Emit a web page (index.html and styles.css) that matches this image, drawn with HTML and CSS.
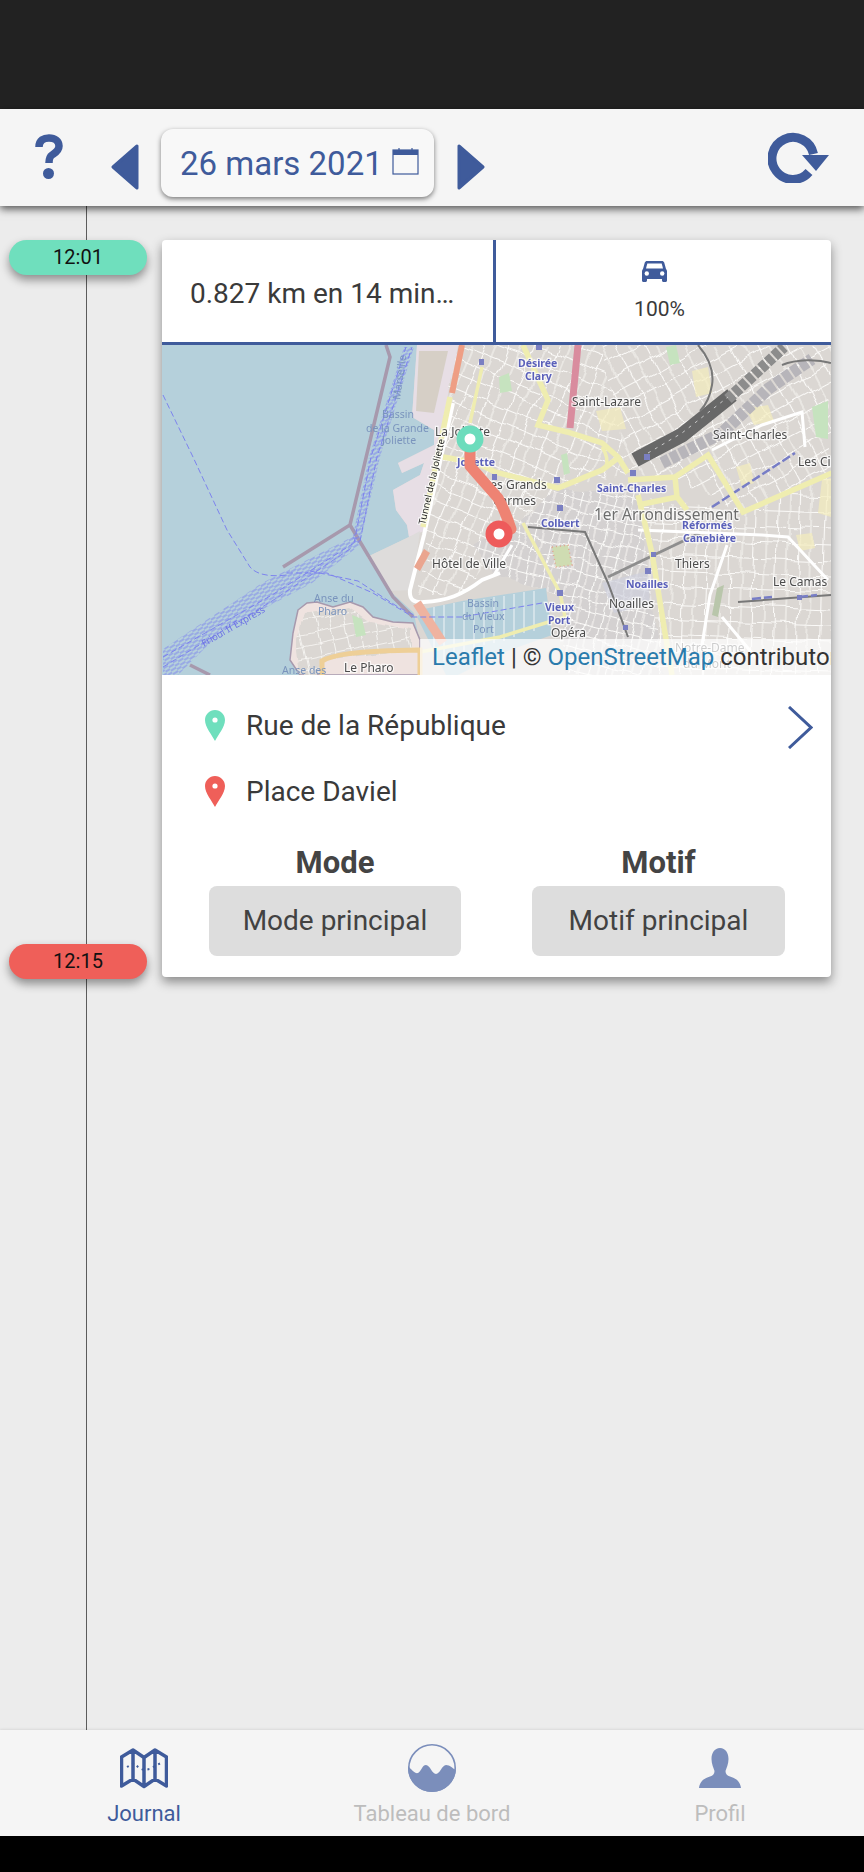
FILE: index.html
```html
<!doctype html>
<html lang="fr">
<head>
  <meta charset="utf-8">
  <meta content="width=device-width, initial-scale=1" name="viewport">
  <title>Journal</title>
  <link rel="stylesheet" href="styles.css">
</head>
<body>
  <div id="status_bar"></div>

  <div id="header">
    <svg class="help_icon" viewBox="0 0 28 45">
      <path class="help_hook" d="M4 13C4 6 9 4 14 4C20 4 24 7 24 12C24 17 20 19 17 21C14 23 14 26 14 29"/>
      <circle class="blue_fill" cx="13.5" cy="39.5" r="5.5"/>
    </svg>
    <svg class="arrow_icon arrow_prev" viewBox="0 0 28 46">
      <path class="blue_fill rounded" d="M26 2V44L2 23Z"/>
    </svg>
    <div id="date_button">
      <span>26 mars 2021</span>
      <svg class="calendar_icon" viewBox="0 0 27 27">
        <rect class="calendar_frame" x="1" y="2" width="25" height="24"/>
        <rect class="blue_fill" x="1" y="2" width="25" height="5"/>
        <path class="calendar_rings" d="M7 0V4M20 0V4"/>
      </svg>
    </div>
    <svg class="arrow_icon arrow_next" viewBox="0 0 28 46">
      <path class="blue_fill rounded" d="M2 2V44L26 23Z"/>
    </svg>
    <svg class="refresh_icon" viewBox="0 0 61 51">
      <path class="refresh_arc" d="M41 40A21 21 0 1 1 45.5 22"/>
      <path class="blue_fill" d="M34 23H61L48 39Z"/>
    </svg>
  </div>

  <div id="journal">
    <div class="times">
      <div class="time_pill pill_start">12:01</div>
      <div class="time_pill pill_end">12:15</div>
    </div>

    <div class="trip_card">
      <div class="trip_head">
        <div class="trip_summary"><span>0.827 km en 14 minutes</span></div>
        <div class="trip_mode">
          <svg class="car_icon" viewBox="0 0 25 21">
            <path class="blue_fill" d="M5 0H20C21 0 21.800 .6 22.200 1.600L24 8C24.600 8.600 25 9.400 25 10.300V19.500C25 20.300 24.400 21 23.500 21H21.500C20.700 21 20 20.300 20 19.500V18H5V19.500C5 20.300 4.300 21 3.500 21H1.500C.6 21 0 20.300 0 19.500V10.300C0 9.400 .4 8.600 1 8L2.800 1.600C3.200 .6 4 0 5 0Z"/>
            <path class="car_glass" d="M5.300 2.500H19.700L21 7.500H4Z"/>
            <circle class="car_glass" cx="4.800" cy="12.500" r="2.200"/>
            <circle class="car_glass" cx="20.200" cy="12.500" r="2.200"/>
          </svg>
          <span>100%</span>
        </div>
      </div>

      <div class="trip_map">
        <svg class="map_tiles" viewBox="0 0 669 330">
          <defs>
            <pattern id="grid_north" width="23" height="14" patternUnits="userSpaceOnUse" patternTransform="rotate(22)">
              <rect class="block" width="23" height="14"/><path class="street" d="M0 0H23M0 0V14"/><path class="lane" d="M11 0V14"/>
            </pattern>
            <pattern id="grid_east" width="25" height="15" patternUnits="userSpaceOnUse" patternTransform="rotate(-28)">
              <rect class="block" width="25" height="15"/><path class="street" d="M0 0H25M0 0V15"/><path class="lane" d="M12 0V15"/>
            </pattern>
            <pattern id="grid_south" width="23" height="16" patternUnits="userSpaceOnUse" patternTransform="rotate(2)">
              <rect class="block" width="23" height="16"/><path class="street" d="M0 0H23M0 0V16"/><path class="lane" d="M12 0V16"/>
            </pattern>
            <pattern id="grid_center" width="17" height="12" patternUnits="userSpaceOnUse" patternTransform="rotate(14)">
              <rect class="block block_dark" width="17" height="12"/><path class="street" d="M0 0H17M0 0V12"/><path class="lane" d="M8 0V12"/>
            </pattern>
            <pattern id="grid_pharo" width="15" height="12" patternUnits="userSpaceOnUse" patternTransform="rotate(-12)">
              <rect class="block" width="15" height="12"/><path class="street thin" d="M0 0H15M0 0V12"/>
            </pattern>
            <pattern id="ferry_hatch" width="11" height="4" patternUnits="userSpaceOnUse" patternTransform="rotate(-32)">
              <path class="ferry_dash" d="M0 1H6M6 3H11"/>
            </pattern>
            <filter id="soften"><feGaussianBlur stdDeviation="0.45"/></filter>
            <filter id="wobble" x="0" y="0" width="100%" height="100%">
              <feTurbulence type="fractalNoise" baseFrequency="0.035" numOctaves="2" seed="4" result="noise"/>
              <feDisplacementMap in="SourceGraphic" in2="noise" scale="11" xChannelSelector="R" yChannelSelector="G"/>
            </filter>
          </defs>

          <g filter="url(#soften)">
            <rect class="water" width="669" height="330"/>

            <!-- land and port -->
            <path class="land" d="M255 0L250 72L272 85L272 100L236 118L240 128L262 118L258 130L231 145L234 165L245 180L247 192L205 212L228 246L252 268L258 300L258 330H669V0Z"/>
            <path class="port" d="M255 0L250 72L272 85L272 100L236 118L240 128L262 118L258 130L231 145L234 165L245 180L247 192L262 186L290 50L298 0Z"/>
            <path class="quay" d="M257 6H286L272 68L254 66Z"/>
            <path class="quay_gray" d="M205 212L247 192L258 186L250 245L228 246Z"/>
            <path class="peninsula" d="M136 265L145 258L155 257L171 262L188 257L201 262L211 272L231 277L251 278L258 295V330H138L128 315L131 288Z"/>
            <g filter="url(#wobble)">
              <path fill="url(#grid_pharo)" d="M142 270L186 262L208 277L250 284V305L160 315L155 330H138L134 296Z"/>
            </g>

            <!-- street grids -->
            <g filter="url(#wobble)">
              <path fill="url(#grid_north)" d="M294 0H440L466 130L396 143L353 180L300 250H256L265 182Z"/>
              <path fill="url(#grid_east)" d="M440 0H669V130L581 167L513 135L466 130Z"/>
              <path fill="url(#grid_south)" d="M476 150L581 167L669 130V330H500Z"/>
              <path fill="url(#grid_center)" d="M353 180L396 143L476 150L500 330H405L398 248L340 232L310 200Z"/>
            </g>

            <!-- vieux port -->
            <path class="water" d="M262 264L300 256L384 243L390 290L340 308L296 330H284L255 272Z"/>
            <path class="berths" d="M272 262V312M282 260V316M292 258V316M302 257V308M312 255V304M322 254V300M332 252V298M342 251V296M352 249V292M362 247V288M372 246V286"/>

            <!-- green and tinted areas -->
            <path class="green" d="M650 62L666 56V94L654 92Z"/>
            <path class="green" d="M337 32L347 28L350 46L338 48Z"/>
            <path class="green" d="M399 110L405 108L408 128L402 130Z"/>
            <path class="green" d="M190 270L200 274L204 290L194 292Z"/>
            <path class="green" d="M504 2L514 0L518 18L508 20Z"/>
            <path class="green_gray" d="M555 243L562 240L556 272L550 270Z"/>
            <path class="park" d="M390 202L406 200L410 220L394 222Z"/>
            <path class="tint" d="M660 135L669 133V172L656 168Z"/>
            <path class="tint" d="M434 66L458 62L464 84L440 86Z"/>
            <path class="tint" d="M584 64L606 60L612 76L592 80Z"/>
            <path class="tint" d="M530 26L546 22L550 48L534 52Z"/>
            <path class="tint" d="M574 122L588 118L592 138L580 142Z"/>
            <path class="tint" d="M634 190L650 188L653 203L638 206Z"/>
            <path class="plaza" d="M440 238L486 226L488 260L452 268Z"/>

            <!-- railway -->
            <path class="rail_lite" d="M500 118L560 88L606 44L650 14"/>
            <path class="rail_yard" d="M473 115L520 90L570 50"/>
            <path class="rail_fade" d="M566 54L594 28L622 2"/>
            <path class="rail_flecks" d="M486 108L520 88L566 52"/>
            <path class="rail_line" d="M536 0C548 14 552 28 550 40C548 52 544 60 538 66M620 20C635 14 655 14 669 18"/>
            <path class="rail_line" d="M366 182L423 187L446 238L466 292"/>
            <path class="rail_line" d="M576 257L669 250"/>
            <path class="rail_double" d="M446 232L540 187"/>
            <path class="metro" d="M550 162L633 108M590 254L610 252M637 252L655 250"/>

            <!-- roads -->
            <path class="road_white" d="M291 58L262 190L248 245C247 255 252 258 262 257C285 256 300 250 320 235L338 228"/>
            <path class="road_white thin_white" d="M476 185L600 190L626 192L666 235"/>
            <path class="road_white thin_white" d="M550 105L600 80L640 67L643 102"/>
            <path class="road_white thin_white" d="M565 200L548 250L540 300M560 272L600 320M350 200L332 230"/>
            <path class="road_pink" d="M416 0L408 83"/>
            <path class="road_motor" d="M300 0L290 48"/>
            <path class="road_patch" d="M252 222L262 204L268 208L258 226Z"/>
            <path class="road_motor thin_motor" d="M255 258L281 298"/>
            <path class="road_yellow" d="M288 52L261 182"/>
            <path class="road_yellow thin_yellow" d="M320 22L308 78"/>
            <path class="road_yellow" d="M361 0L386 55L376 80L405 87L440 98L456 112L466 128"/>
            <path class="road_yellow" d="M281 112L315 118L333 127L396 143L440 125L456 113"/>
            <path class="road_yellow thin_yellow" d="M440 102C444 108 446 116 444 122"/>
            <path class="road_yellow" d="M466 135L513 132L546 110L581 167L670 128"/>
            <path class="road_yellow" d="M513 132L515 152L476 160M515 152L525 165"/>
            <path class="road_yellow" d="M476 150L490 208L503 288L510 330"/>
            <path class="road_yellow thin_yellow" d="M361 178L398 248L403 272L338 292L258 307"/>
            <path class="road_orange" d="M160 330V316C170 310 190 306 258 305V330"/>

            <!-- sea walls and ferries -->
            <path class="seawall" d="M224 0L228 12L188 180L121 222M188 180L231 252L251 272"/>
            <path class="seawall" d="M28 320L48 330"/>
            <path class="ferry" d="M1 50L31 112L65 185L88 222C95 230 108 232 125 230"/>
            <path class="ferry" d="M125 228H165L211 248L251 272H300L380 258"/>
            <path class="ferry" d="M148 226L196 236L236 262L252 270"/>
            <path fill="url(#ferry_hatch)" d="M1 304L100 238L194 190L198 200L150 238L60 286L16 330H1Z"/>
            <path fill="url(#ferry_hatch)" d="M190 196L207 112L242 2H252L218 112L198 198Z"/>
            <path class="ferry" d="M1 312L110 250L192 198"/>
            <path class="ferry" d="M1 322L110 256L191 202"/>
            <path class="ferry" d="M192 198L209 112L244 2"/>
            <path class="ferry" d="M198 196L215 112L250 2"/>

            <!-- stations -->
            <path class="station" d="M374 0H380V5H374ZM468 125H474V131H468ZM392 132H398V138H392ZM395 160H401V166H395ZM395 245H401V251H395ZM483 223H489V229H483ZM489 207H494V212H489ZM482 109H488V115H482ZM317 14H322V20H317ZM330 129H335V135H330ZM635 250H640V255H635ZM461 280H466V285H461Z"/>

            <!-- labels -->
            <text class="label water_label" x="220" y="73">Bassin</text>
            <text class="label water_label" x="204" y="87">de la Grande</text>
            <text class="label water_label" x="220" y="99">Joliette</text>
            <text class="label water_label" transform="translate(238 55) rotate(-82)">Marseille</text>
            <text class="label ferry_label" transform="translate(42 302) rotate(-30)">Frioul If Express</text>
            <text class="label water_label" x="152" y="257">Anse du</text>
            <text class="label water_label" x="156" y="270">Pharo</text>
            <text class="label water_label" x="120" y="329">Anse des</text>
            <text class="label water_label" x="305" y="262">Bassin</text>
            <text class="label water_label" x="300" y="275">du Vieux</text>
            <text class="label water_label" x="311" y="288">Port</text>

            <text class="label" x="273" y="91">La Joliette</text>
            <text class="label small_dark" transform="translate(263 180) rotate(-77)">Tunnel de la Joliette</text>
            <text class="label" x="270" y="223">Hôtel de Ville</text>
            <text class="label" x="182" y="327">Le Pharo</text>
            <text class="label" x="322" y="144">Les Grands</text>
            <text class="label" x="331" y="160">Carmes</text>
            <text class="label" x="410" y="61">Saint-Lazare</text>
            <text class="label" x="551" y="94">Saint-Charles</text>
            <text class="label" x="636" y="121">Les Cinq</text>
            <text class="label" x="513" y="223">Thiers</text>
            <text class="label" x="611" y="241">Le Camas</text>
            <text class="label" x="447" y="263">Noailles</text>
            <text class="label" x="389" y="292">Opéra</text>
            <text class="label" x="513" y="307">Notre-Dame</text>
            <text class="label" x="521" y="323">du Mont</text>
            <text class="label district" x="432" y="175">1er Arrondissement</text>

            <text class="label stop_label" x="356" y="22">Désirée</text>
            <text class="label stop_label" x="363" y="35">Clary</text>
            <text class="label stop_label" x="295" y="121">Joliette</text>
            <text class="label stop_label" x="435" y="147">Saint-Charles</text>
            <text class="label stop_label" x="379" y="182">Colbert</text>
            <text class="label stop_label" x="520" y="184">Réformés</text>
            <text class="label stop_label" x="521" y="197">Canebière</text>
            <text class="label stop_label" x="464" y="243">Noailles</text>
            <text class="label stop_label" x="383" y="266">Vieux</text>
            <text class="label stop_label" x="386" y="279">Port</text>
          </g>

          <!-- trip -->
          <path class="route" d="M308 94V121L336 153C342 163 346 175 349 184L337 189"/>
          <circle class="marker marker_start" cx="308" cy="94" r="9.500"/>
          <circle class="marker marker_end" cx="337" cy="189" r="9.500"/>
        </svg>
        <div class="map_credit"><a>Leaflet</a> | © <a>OpenStreetMap</a> contributors</div>
      </div>

      <div class="trip_stops">
        <div class="stop_list">
          <div class="stop_row">
            <svg class="pin_icon pin_start" viewBox="0 0 20 31">
              <path d="M10 0C15.500 0 20 4.500 20 10C20 17 13 25 10 31C7 25 0 17 0 10C0 4.500 4.500 0 10 0Z"/>
              <circle class="pin_hole" cx="10" cy="10" r="2.600"/>
            </svg>
            <span>Rue de la République</span>
          </div>
          <div class="stop_row">
            <svg class="pin_icon pin_end" viewBox="0 0 20 31">
              <path d="M10 0C15.500 0 20 4.500 20 10C20 17 13 25 10 31C7 25 0 17 0 10C0 4.500 4.500 0 10 0Z"/>
              <circle class="pin_hole" cx="10" cy="10" r="2.600"/>
            </svg>
            <span>Place Daviel</span>
          </div>
        </div>
        <svg class="chevron_icon" viewBox="0 0 25 43">
          <path d="M1 1L23 21.500L1 42"/>
        </svg>
      </div>

      <div class="trip_tags">
        <div class="tag_col">
          <div class="tag_title">Mode</div>
          <div class="tag_button">Mode principal</div>
        </div>
        <div class="tag_col">
          <div class="tag_title">Motif</div>
          <div class="tag_button">Motif principal</div>
        </div>
      </div>
    </div>
  </div>

  <div id="tab_bar">
    <div class="tab tab_active">
      <svg class="tab_icon" viewBox="0 0 48 48">
        <g transform="translate(0 4)">
          <path class="map_fold" d="M1.500 9L13 2L24 9.500L35 2L46.500 9V38L35 31L24 38.500L13 31L1.500 38ZM13 2V31M24 9.500V38.500M35 2V31"/>
          <path class="map_dots" d="M7 19L14 15L19 20L24 22L30 21L35 18L41 15"/>
        </g>
      </svg>
      <span>Journal</span>
    </div>
    <div class="tab">
      <svg class="tab_icon" viewBox="0 0 48 48">
        <clipPath id="dial_clip"><circle cx="24" cy="24" r="24"/></clipPath>
        <circle class="dial_ring" cx="24" cy="24" r="23.200"/>
        <path class="soft_fill" clip-path="url(#dial_clip)" d="M0 22C4 26 7 30 10 29C13 28 14 21 18 21C22 21 24 30 28 30C32 30 34 21 38 21C42 21 44 24 48 26V48H0Z"/>
      </svg>
      <span>Tableau de bord</span>
    </div>
    <div class="tab">
      <svg class="tab_icon" viewBox="-3 -4 48 48">
        <path class="soft_fill" d="M21 0C26.500 0 29.500 5 29.500 11C29.500 16 27.500 20 26.500 23C26.500 26 28 27.500 31 28.500C37 30.500 41 33 42 40H0C1 33 5 30.500 11 28.500C14 27.500 15.500 26 15.500 23C14.500 20 12.500 16 12.500 11C12.500 5 15.500 0 21 0Z"/>
      </svg>
      <span>Profil</span>
    </div>
  </div>

  <div id="nav_bar"></div>
</body>
</html>
```

FILE: styles.css
```css
* {
  margin: 0; padding: 0;
  box-sizing: border-box;
}
html, body {
  width: 100%;
  height: 100%;
  overflow: hidden;
}
body {
  display: flex;
  flex-direction: column;
  background: #ececec;
  font-family: Roboto, sans-serif;
  color: #3a3a3a;
}
svg {
  display: block;
}
.blue_fill {
  fill: #3f5b9b;
}
.soft_fill {
  fill: #7b8ebb;
}
.rounded {
  stroke: #3f5b9b;
  stroke-width: 3;
  stroke-linejoin: round;
}

#status_bar {
  height: 109px;
  background: #222222;
}
#nav_bar {
  height: 36px;
  background: #000;
}

/* Top bar */
#header {
  position: relative;
  z-index: 3;
  height: 97px;
  display: flex;
  align-items: flex-start;
  background: #f5f5f5;
  box-shadow: 0 3px 8px rgba(0,0,0,0.65);
}
.help_icon {
  width: 28px;
  height: 45px;
  margin: 25px 0 0 35px;
}
.help_hook {
  fill: none;
  stroke: #3f5b9b;
  stroke-width: 7.5;
}
.arrow_icon {
  width: 28px;
  height: 46px;
  margin-top: 35px;
}
.arrow_prev {
  margin-left: 48px;
}
.arrow_next {
  margin-left: 23px;
}
#date_button {
  width: 273px;
  height: 68px;
  margin: 20px 0 0 22px;
  display: flex;
  align-items: center;
  padding-left: 19px;
  border-radius: 12px;
  background: #f8f8f8;
  box-shadow: 0 2px 5px rgba(0,0,0,0.5);
  color: #3f5b9b;
  font-size: 33px;
}
.calendar_icon {
  width: 27px;
  height: 27px;
  margin: -4px 0 0 9px;
}
.calendar_frame {
  fill: none;
  stroke: #3f5b9b;
  stroke-width: 1.2;
}
.calendar_rings {
  stroke: #3f5b9b;
  stroke-width: 1.2;
}
.refresh_icon {
  width: 61px;
  height: 51px;
  margin: 23px 0 0 auto;
  margin-right: 35px;
}
.refresh_arc {
  fill: none;
  stroke: #3f5b9b;
  stroke-width: 9;
}

/* Journal */
#journal {
  position: relative;
  flex: 1;
  display: flex;
  align-items: flex-start;
  padding-top: 34px;
}
#journal:before {
  content: '';
  position: absolute;
  top: 0; bottom: 0;
  left: 86px;
  width: 1px;
  background: #5c5c5c;
}
.times {
  position: relative;
  width: 162px;
  height: 739px;
  display: flex;
  flex-direction: column;
  justify-content: space-between;
  padding-left: 9px;
}
.time_pill {
  width: 138px;
  height: 35px;
  border-radius: 18px;
  color: #111;
  font-size: 20px;
  line-height: 35px;
  text-align: center;
  box-shadow: 0 5px 10px rgba(0,0,0,0.4);
}
.pill_start {
  background: #6fdfbd;
}
.pill_end {
  background: #ef5f59;
}

.trip_card {
  position: relative;
  width: 669px;
  height: 737px;
  background: #fff;
  border-radius: 4px;
  box-shadow: 0 5px 11px rgba(0,0,0,0.42);
}
.trip_head {
  height: 105px;
  display: flex;
  border-bottom: 3px solid #3f5b9b;
}
.trip_summary {
  width: 334px;
  padding: 4px 38px 0 28px;
  display: flex;
  align-items: center;
  border-right: 3px solid #3f5b9b;
  font-size: 28px;
}
.trip_summary span {
  overflow: hidden;
  white-space: nowrap;
  text-overflow: ellipsis;
}
.trip_mode {
  flex: 1;
  display: flex;
  flex-direction: column;
  align-items: center;
  padding: 21px 8px 0 0;
  font-size: 21px;
}
.car_icon {
  width: 25px;
  height: 21px;
  margin: 0 0 15px -10px;
}
.car_glass {
  fill: #fff;
}

/* Map */
.trip_map {
  position: relative;
  height: 330px;
  overflow: hidden;
}
.map_tiles {
  width: 669px;
  height: 330px;
}
.map_credit {
  position: absolute;
  right: 0; bottom: 0;
  width: 411px;
  height: 36px;
  padding-left: 12px;
  background: rgba(255,255,255,0.72);
  font-size: 24px;
  line-height: 36px;
  white-space: nowrap;
  overflow: hidden;
  color: #333;
}
.map_credit a {
  color: #2a7bac;
}
.water {
  fill: #b5d0db;
}
.land {
  fill: #dbd7d3;
}
.port {
  fill: #e7dee5;
}
.quay {
  fill: #d6cfc6;
}
.quay_gray {
  fill: #dedcdb;
}
.peninsula {
  fill: #efe3e0;
  stroke: #a799ad;
  stroke-width: 1.5;
}
.block {
  fill: #dbd7d3;
}
.block_dark {
  fill: #d4d1d1;
}
.street {
  stroke: #fbfaf8;
  stroke-width: 2.2;
  fill: none;
}
.lane {
  stroke: #f4f2ef;
  stroke-width: 1.2;
  fill: none;
}
.thin {
  stroke-width: 1.6;
}
.berths {
  stroke: #e6eff2;
  stroke-width: 1.2;
  fill: none;
}
.green {
  fill: #c6e3bf;
}
.green_gray {
  fill: #b9c6ab;
}
.park {
  fill: #cfdcb2;
  stroke: #e2a48f;
  stroke-width: 1.5;
  stroke-dasharray: 1 3;
}
.tint {
  fill: #f3ecbc;
  opacity: 0.7;
}
.plaza {
  fill: #cfd0dd;
  opacity: 0.7;
}
.rail_yard {
  fill: none;
  stroke: #686868;
  stroke-width: 15;
}
.rail_fade {
  fill: none;
  stroke: #8c8c8c;
  stroke-width: 11;
  stroke-dasharray: 7 2;
}
.rail_flecks {
  fill: none;
  stroke: #c9c9c9;
  stroke-width: 1;
  stroke-dasharray: 3 5;
}
.rail_lite {
  fill: none;
  stroke: #b7b5ba;
  stroke-width: 12;
  stroke-dasharray: 8 2;
}
.rail_line {
  fill: none;
  stroke: #787878;
  stroke-width: 2;
}
.rail_double {
  fill: none;
  stroke: #8e8e8e;
  stroke-width: 3;
}
.metro {
  fill: none;
  stroke: #777dc6;
  stroke-width: 2.5;
  stroke-dasharray: 9 3;
}
.road_white {
  fill: none;
  stroke: #fff;
  stroke-width: 4;
}
.thin_white {
  stroke-width: 3;
}
.road_pink {
  fill: none;
  stroke: #d98c9e;
  stroke-width: 7;
}
.road_motor {
  fill: none;
  stroke: #ee9e84;
  stroke-width: 6;
}
.road_patch {
  fill: #eaa58f;
}
.thin_motor {
  stroke: #efb3a0;
  stroke-width: 9;
}
.road_yellow {
  fill: none;
  stroke: #efedb0;
  stroke-width: 5.5;
}
.thin_yellow {
  stroke-width: 3.5;
}
.road_orange {
  fill: none;
  stroke: #eecf97;
  stroke-width: 5;
}
.seawall {
  fill: none;
  stroke: #a799ad;
  stroke-width: 3.5;
}
.ferry {
  fill: none;
  stroke: #7d83ee;
  stroke-width: 1;
  stroke-dasharray: 6 3;
}
.ferry_dash {
  fill: none;
  stroke: #7d83ee;
  stroke-width: 1.1;
}
.station {
  fill: #7a7fc2;
}
.label {
  font-family: "Noto Sans", sans-serif;
  font-size: 12px;
  fill: #4c4c4c;
  stroke: rgba(255,255,255,0.75);
  stroke-width: 2.5px;
  paint-order: stroke;
}
.water_label {
  font-size: 10.5px;
  fill: #7a94bd;
  stroke: none;
}
.ferry_label {
  font-size: 9.5px;
  fill: #6c72e4;
  stroke: none;
}
.small_dark {
  font-size: 9.5px;
  fill: #222;
}
.district {
  font-size: 15.5px;
  fill: #6d6d6d;
}
.stop_label {
  font-size: 10.5px;
  fill: #5a60ba;
  font-weight: 700;
}
.route {
  fill: none;
  stroke: #ee8373;
  stroke-width: 11;
  stroke-linejoin: round;
}
.marker {
  fill: #fff;
  stroke-width: 8;
}
.marker_start {
  stroke: #6cdcbc;
}
.marker_end {
  stroke: #ee5b5b;
}

/* Stops */
.trip_stops {
  height: 171px;
  display: flex;
  padding: 17px 18px 0 43px;
}
.stop_list {
  flex: 1;
}
.stop_row {
  height: 66px;
  display: flex;
  align-items: center;
  gap: 21px;
  font-size: 28px;
}
.pin_icon {
  width: 20px;
  height: 31px;
}
.pin_start path {
  fill: #6fdfbd;
}
.pin_end path {
  fill: #ef5f59;
}
.pin_hole {
  fill: #fff;
}
.chevron_icon {
  width: 25px;
  height: 43px;
  margin-top: 14px;
  fill: none;
  stroke: #3f5b9b;
  stroke-width: 3;
}

/* Mode and motif */
.trip_tags {
  display: grid;
  grid-template-columns: 252px 253px;
  gap: 71px;
  padding-left: 47px;
}
.tag_title {
  height: 34px;
  margin-bottom: 6px;
  font-size: 31px;
  font-weight: 700;
  line-height: 34px;
  text-align: center;
  color: #444;
}
.tag_button {
  height: 70px;
  border-radius: 8px;
  background: #dddddd;
  font-size: 28px;
  line-height: 70px;
  text-align: center;
  color: #424242;
}

/* Bottom tabs */
#tab_bar {
  position: relative;
  z-index: 2;
  height: 106px;
  display: grid;
  grid-template-columns: repeat(3, 1fr);
  background: #f5f5f5;
  box-shadow: 0 0 3px rgba(0,0,0,0.15);
}
.tab {
  position: relative;
  display: flex;
  flex-direction: column;
  align-items: center;
  padding-top: 14px;
  color: #bdbdbd;
  font-size: 22px;
}
.tab_active {
  color: #3f5b9b;
}
.tab_icon {
  height: 48px;
  width: 48px;
  margin-bottom: 9px;
}
.map_fold {
  fill: none;
  stroke: #3f5b9b;
  stroke-width: 3.5;
  stroke-linejoin: round;
}
.map_dots {
  fill: none;
  stroke: #3f5b9b;
  stroke-width: 2;
  stroke-dasharray: 2 4;
}
.dial_ring {
  fill: none;
  stroke: #7b8ebb;
  stroke-width: 1.6;
}
```
